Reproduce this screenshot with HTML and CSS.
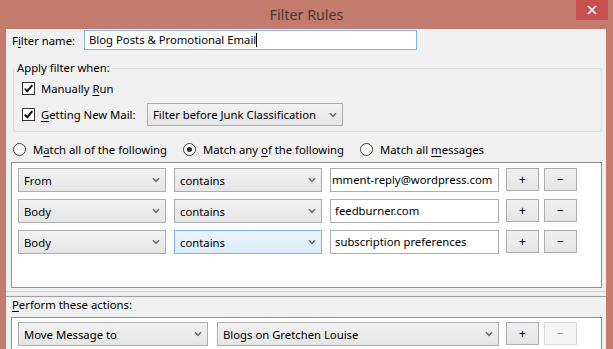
FILE: index.html
```html
<!DOCTYPE html>
<html lang="en">
<head>
  <meta charset="UTF-8">
  <title>Filter Rules</title>
  <link rel="stylesheet" href="styles.css">
</head>
<body>

  <div class="window">
    <!-- Title bar -->
    <div class="titlebar">
      <span></span>
      <div class="title">Filter Rules</div>
      <button class="close">
        <svg width="10" height="10" viewBox="0 0 10 10"><path d="M1 1 L9 9 M9 1 L1 9" stroke="#fff" stroke-width="1.6"/></svg>
      </button>
    </div>

    <div class="client">
      <!-- Filter name -->
      <div class="name-row">
        <label class="name-label">F<u>i</u>lter name:</label>
        <div class="textbox focused">Blog Posts &amp; Promotional Email<span class="caret"></span></div>
      </div>

      <!-- Apply filter when -->
      <fieldset class="groupbox">
        <legend>Apply filter when:</legend>
        <div class="check-row">
          <span class="checkbox"><svg width="11" height="11" viewBox="0 0 11 11"><path d="M1.8 5.6 L4.3 8.2 L9.3 2.2" fill="none" stroke="#111" stroke-width="2"/></svg></span>
          <span>Manually <u>R</u>un</span>
        </div>
        <div class="check-row second">
          <span class="checkbox"><svg width="11" height="11" viewBox="0 0 11 11"><path d="M1.8 5.6 L4.3 8.2 L9.3 2.2" fill="none" stroke="#111" stroke-width="2"/></svg></span>
          <span class="check-label"><u>G</u>etting New Mail:</span>
          <div class="menulist junk">Filter before Junk Classification<svg class="chev" width="8" height="6" viewBox="0 0 8 6"><path d="M1 1.2 L4 4.3 L7 1.2" fill="none" stroke="#6a6a6a" stroke-width="1.6"/></svg></div>
        </div>
      </fieldset>

      <!-- Match mode -->
      <div class="radio-row">
        <div class="radio-item"><span class="radio"></span><span>M<u>a</u>tch all of the following</span></div>
        <div class="radio-item"><span class="radio selected"></span><span>Match any <u>o</u>f the following</span></div>
        <div class="radio-item"><span class="radio"></span><span>Match all <u>m</u>essages</span></div>
      </div>

      <!-- Rules list -->
      <div class="listbox rules">
        <div class="rule-row">
          <div class="menulist field">From<svg class="chev" width="8" height="6" viewBox="0 0 8 6"><path d="M1 1.2 L4 4.3 L7 1.2" fill="none" stroke="#6a6a6a" stroke-width="1.6"/></svg></div>
          <div class="menulist op">contains<svg class="chev" width="8" height="6" viewBox="0 0 8 6"><path d="M1 1.2 L4 4.3 L7 1.2" fill="none" stroke="#6a6a6a" stroke-width="1.6"/></svg></div>
          <div class="textbox value scrolled">mment-reply@wordpress.com</div>
          <button class="btn plus">+</button>
          <button class="btn minus">&minus;</button>
        </div>
        <div class="rule-row">
          <div class="menulist field">Body<svg class="chev" width="8" height="6" viewBox="0 0 8 6"><path d="M1 1.2 L4 4.3 L7 1.2" fill="none" stroke="#6a6a6a" stroke-width="1.6"/></svg></div>
          <div class="menulist op">contains<svg class="chev" width="8" height="6" viewBox="0 0 8 6"><path d="M1 1.2 L4 4.3 L7 1.2" fill="none" stroke="#6a6a6a" stroke-width="1.6"/></svg></div>
          <div class="textbox value">feedburner.com</div>
          <button class="btn plus">+</button>
          <button class="btn minus">&minus;</button>
        </div>
        <div class="rule-row">
          <div class="menulist field">Body<svg class="chev" width="8" height="6" viewBox="0 0 8 6"><path d="M1 1.2 L4 4.3 L7 1.2" fill="none" stroke="#6a6a6a" stroke-width="1.6"/></svg></div>
          <div class="menulist op hover">contains<svg class="chev" width="8" height="6" viewBox="0 0 8 6"><path d="M1 1.2 L4 4.3 L7 1.2" fill="none" stroke="#6a6a6a" stroke-width="1.6"/></svg></div>
          <div class="textbox value">subscription preferences</div>
          <button class="btn plus">+</button>
          <button class="btn minus">&minus;</button>
        </div>
      </div>

      <div class="splitter"></div>

      <!-- Actions -->
      <div class="actions-label"><u>P</u>erform these actions:</div>
      <div class="listbox actions">
        <div class="rule-row">
          <div class="menulist action">Move Message to<svg class="chev" width="8" height="6" viewBox="0 0 8 6"><path d="M1 1.2 L4 4.3 L7 1.2" fill="none" stroke="#6a6a6a" stroke-width="1.6"/></svg></div>
          <div class="menulist folder">Blogs on Gretchen Louise<svg class="chev" width="8" height="6" viewBox="0 0 8 6"><path d="M1 1.2 L4 4.3 L7 1.2" fill="none" stroke="#6a6a6a" stroke-width="1.6"/></svg></div>
          <button class="btn plus">+</button>
          <button class="btn minus" disabled>&minus;</button>
        </div>
      </div>
    </div>
  </div>

</body>
</html>
```

FILE: styles.css
```css
* {
  margin: 0;
  padding: 0;
  box-sizing: border-box;
}

body {
  width: 613px;
  height: 349px;
  overflow: hidden;
  background-color: #c27b6c;
  font-family: "Segoe UI", "Noto Sans", sans-serif;
  font-size: 11.3px;
  color: #000;
}

u {
  text-underline-offset: 2px;
}

.window {
  display: flex;
  flex-direction: column;
  height: 349px;
}

/* Title bar */
.titlebar {
  display: grid;
  grid-template-columns: 1fr auto 1fr;
  height: 29px;
}

.title {
  font-size: 14.3px;
  line-height: 29px;
  color: #4a3833;
}

.close {
  justify-self: end;
  width: 32px;
  height: 20px;
  margin-right: 5px;
  border: none;
  background-color: #c75050;
  display: flex;
  align-items: center;
  justify-content: center;
}

/* Client area */
.client {
  flex: 1;
  margin: 0 7px 0 6px;
  padding-top: 1px;
  background-color: #f0f0f0;
  overflow: hidden;
}

.name-row {
  display: flex;
  align-items: center;
  height: 20px;
  padding-left: 6px;
}

.name-label {
  width: 72px;
}

.textbox {
  height: 20px;
  background-color: #fff;
  border: 1px solid #abadb3;
  padding: 0 4px;
  line-height: 18px;
  white-space: nowrap;
  overflow: hidden;
}

.textbox.focused {
  width: 333px;
  border-color: #7eb4ea;
}

.caret {
  display: inline-block;
  width: 1px;
  height: 14px;
  background-color: #000;
  vertical-align: -3px;
}

/* Group box */
.groupbox {
  margin: 10px 4px 0 7px;
  padding: 4px 7px 5px;
  border: 1px solid #dcdcdc;
  border-radius: 2px;
  min-inline-size: 0;
}

.groupbox legend {
  margin-left: -6px;
  padding: 0 2px;
  line-height: 16px;
}

.check-row {
  display: flex;
  align-items: center;
  height: 16px;
}

.check-row.second {
  height: 23px;
  margin-top: 7px;
}

.checkbox {
  width: 13px;
  height: 13px;
  border: 1px solid #333;
  background-color: #fff;
  margin-left: 1px;
  margin-right: 6px;
  display: flex;
  align-items: center;
  justify-content: center;
}

.check-label {
  width: 106px;
}

/* Dropdowns */
.menulist {
  display: flex;
  align-items: center;
  height: 24px;
  padding-left: 5px;
  border: 1px solid #acacac;
  background: linear-gradient(#f2f2f2, #e5e5e5);
  white-space: nowrap;
}

.menulist .chev {
  margin-left: auto;
  margin-right: 5px;
}

.menulist.hover {
  border-color: #7eb4ea;
  background: linear-gradient(#ecf4fc, #dcecfc);
}

.menulist.junk {
  width: 196px;
  height: 23px;
}

.menulist.field { width: 148px; }
.menulist.op { width: 148px; margin-left: 8px; }
.menulist.action { width: 190px; }
.menulist.folder { width: 282px; margin-left: 9px; }

/* Radios */
.radio-row {
  display: flex;
  align-items: center;
  height: 16px;
  margin-top: 9px;
  padding-left: 7px;
  gap: 16px;
}

.radio-item {
  display: flex;
  align-items: center;
  gap: 7px;
}

.radio {
  width: 13px;
  height: 13px;
  border: 1px solid #3c3c3c;
  border-radius: 50%;
  background-color: #fff;
  display: flex;
  align-items: center;
  justify-content: center;
}

.radio.selected::after {
  content: "";
  width: 5px;
  height: 5px;
  border-radius: 50%;
  background-color: #222;
}

/* List boxes */
.listbox {
  margin: 5px 4px 0 5px;
  background-color: #fff;
  border: 1px solid #8e8f8f;
  padding: 5px 6px;
}

.listbox.rules {
  height: 126px;
}

.listbox.actions {
  margin-top: 4px;
  padding-top: 4px;
  height: 32px;
  border-bottom: none;
}

.rule-row {
  display: flex;
  align-items: flex-start;
  height: 24px;
  margin-bottom: 7px;
}

.actions .rule-row {
  margin-bottom: 0;
}

.textbox.value {
  width: 169px;
  height: 24px;
  margin-left: 8px;
  line-height: 22px;
}

.textbox.scrolled {
  padding-left: 1px;
}

.btn {
  width: 33px;
  height: 23px;
  border: 1px solid #acacac;
  background: linear-gradient(#f0f0f0, #e5e5e5);
  font-family: inherit;
  font-size: 12px;
  color: #000;
}

.btn.plus { margin-left: 7px; }
.btn.minus { margin-left: 5px; }

.btn:disabled {
  border-color: #d9d9d9;
  background: #f4f4f4;
  color: #a0a0a0;
}

/* Splitter */
.splitter {
  margin-top: 3px;
  height: 6px;
  border-top: 1px solid #d9d9d9;
  border-bottom: 1px solid #a0a0a0;
}

.actions-label {
  height: 16px;
  line-height: 16px;
  padding-left: 6px;
}
```
